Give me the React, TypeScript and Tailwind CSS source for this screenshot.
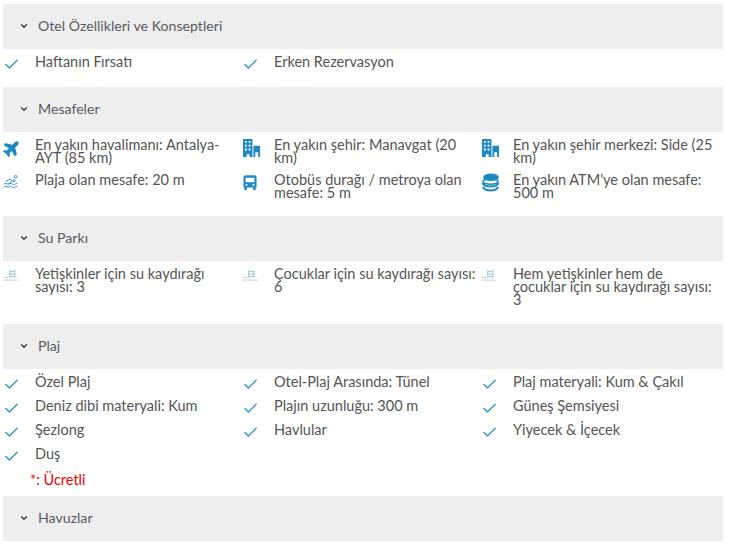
import React from 'react';
import { ChevronDown, Check } from 'lucide-react';
import { FaPlane } from 'react-icons/fa';

const CityIcon = () => (
  <svg viewBox="0 0 20 20" className="w-[19px] h-[19px] fill-[#1f8ac0]">
    <path d="M1 0h10v19H8v-3H5v3H1z M3 2v2h2V2z M7 2v2h2V2z M3 6v2h2V6z M7 6v2h2V6z M3 10v2h2v-2z M7 10v2h2v-2z" fillRule="evenodd" />
    <path d="M12 7h7v12h-2v-5h-3v5h-2z" />
  </svg>
);

const BeachIcon = () => (
  <svg viewBox="0 0 20 16" className="w-[17px] h-[15px] fill-none stroke-[#1f8ac0]" strokeWidth="1">
    <circle cx="15" cy="2.5" r="1.6" />
    <path d="M3 8l6-3 2 3-5 3" />
    <circle cx="13" cy="7" r="1.2" />
    <path d="M1 11c2-1.5 3 0 5 0s3-1.5 5 0 3 0 6-1" />
    <path d="M1 14.5c2-1.5 3 0 5 0s3-1.5 5 0 3 0 6-1" />
  </svg>
);

const BusIcon = () => (
  <svg viewBox="0 0 16 18" className="w-[14px] h-[16px] ml-[1px] mt-[1px] fill-[#1f8ac0]">
    <path fillRule="evenodd" d="M3 0h10a2.500 2.500 0 0 1 2.500 2.500V14H14.500v3h-3v-3h-7v3h-3v-3H.5V2.500A2.500 2.500 0 0 1 3 0z M3 3v5h10V3z M3 10v2h2v-2z M11 10v2h2v-2z" />
  </svg>
);

const CoinsIcon = () => (
  <svg viewBox="0 0 20 20" className="w-[19px] h-[19px] -mt-[1px] fill-white stroke-[#1f8ac0]" strokeWidth="1.6">
    <path d="M2 14.500c2 5 14 5 16 0" fill="none" strokeWidth="2.200" />
    <path d="M1.500 10.500c2 5 15 5 17 0" fill="none" strokeWidth="2.200" />
    <ellipse cx="10" cy="9" rx="8" ry="2.800" fill="none" />
    <ellipse cx="10.500" cy="4.500" rx="7.500" ry="3.200" fill="#1f8ac0" />
  </svg>
);

const SlideIcon = () => (
  <svg viewBox="0 0 20 16" className="w-[17px] h-[14px] fill-none stroke-[#8db9d3]" strokeWidth="1">
    <path d="M8 2v9M14 2v9M8 4h6M8 7h6M8 10h6" />
    <path d="M1 11h5M1 14h18" strokeDasharray="2 1" />
  </svg>
);

type Row = { icon: React.ReactNode; text: string };

const check = <Check className="w-[17px] h-[17px] text-[#2b8fc4]" strokeWidth={1.75} />;
const city = <CityIcon />;

function Header({ title }: { title: string }) {
  return (
    <div className="h-[45px] bg-[#eeeeee] flex items-center pl-[16px] pb-[2px] text-[14.15px] text-[#5a5a62]">
      <ChevronDown className="w-[10px] h-[10px] text-[#333]" strokeWidth={3} />
      <span className="ml-[9px]">{title}</span>
    </div>
  );
}

function Item({ icon, text }: Row) {
  return (
    <div className="flex items-start">
      <div className="w-[32px] shrink-0 flex pt-px">{icon}</div>
      <div className="leading-[13px] text-[14.5px] text-[#555] pr-1">{text}</div>
    </div>
  );
}

export default function App() {
  return (
    <div className="w-[731px] h-[545px] bg-white pt-1 pl-[3px] pr-2 overflow-hidden font-['Lato',sans-serif]">
      <Header title="Otel Özellikleri ve Konseptleri" />
      <div className="grid grid-cols-[239px_239px_239px] content-start pt-[6px] h-[38px]">
        <Item icon={check} text="Haftanın Fırsatı" />
        <Item icon={check} text="Erken Rezervasyon" />
      </div>

      <Header title="Mesafeler" />
      <div className="grid grid-cols-[239px_239px_239px] content-start gap-y-[9px] pt-[6px] h-[84px]">
        <Item icon={<FaPlane className="w-[18px] h-[18px] text-[#1f8ac0] -rotate-45" />} text="En yakın havalimanı: Antalya-AYT (85 km)" />
        <Item icon={city} text="En yakın şehir: Manavgat (20 km)" />
        <Item icon={city} text="En yakın şehir merkezi: Side (25 km)" />
        <Item icon={<BeachIcon />} text="Plaja olan mesafe: 20 m" />
        <Item icon={<BusIcon />} text="Otobüs durağı / metroya olan mesafe: 5 m" />
        <Item icon={<CoinsIcon />} text="En yakın ATM'ye olan mesafe: 500 m" />
      </div>

      <Header title="Su Parkı" />
      <div className="grid grid-cols-[239px_239px_239px] content-start pt-[6px] h-[63px]">
        <Item icon={<SlideIcon />} text="Yetişkinler için su kaydırağı sayısı: 3" />
        <Item icon={<SlideIcon />} text="Çocuklar için su kaydırağı sayısı: 6" />
        <Item icon={<SlideIcon />} text="Hem yetişkinler hem de çocuklar için su kaydırağı sayısı: 3" />
      </div>

      <Header title="Plaj" />
      <div className="grid grid-cols-[239px_239px_239px] content-start gap-y-[6px] pt-[6px]">
        <Item icon={check} text="Özel Plaj" />
        <Item icon={check} text="Otel-Plaj Arasında: Tünel" />
        <Item icon={check} text="Plaj materyali: Kum & Çakıl" />
        <Item icon={check} text="Deniz dibi materyali: Kum" />
        <Item icon={check} text="Plajın uzunluğu: 300 m" />
        <Item icon={check} text="Güneş Şemsiyesi" />
        <Item icon={check} text="Şezlong" />
        <Item icon={check} text="Havlular" />
        <Item icon={check} text="Yiyecek & İçecek" />
        <Item icon={check} text="Duş" />
      </div>
      <div className="h-[31px] pl-[27px] pt-[8px] text-[14.5px] leading-[13px] text-[#f00000]">*: Ücretli</div>

      <Header title="Havuzlar" />
    </div>
  );
}
